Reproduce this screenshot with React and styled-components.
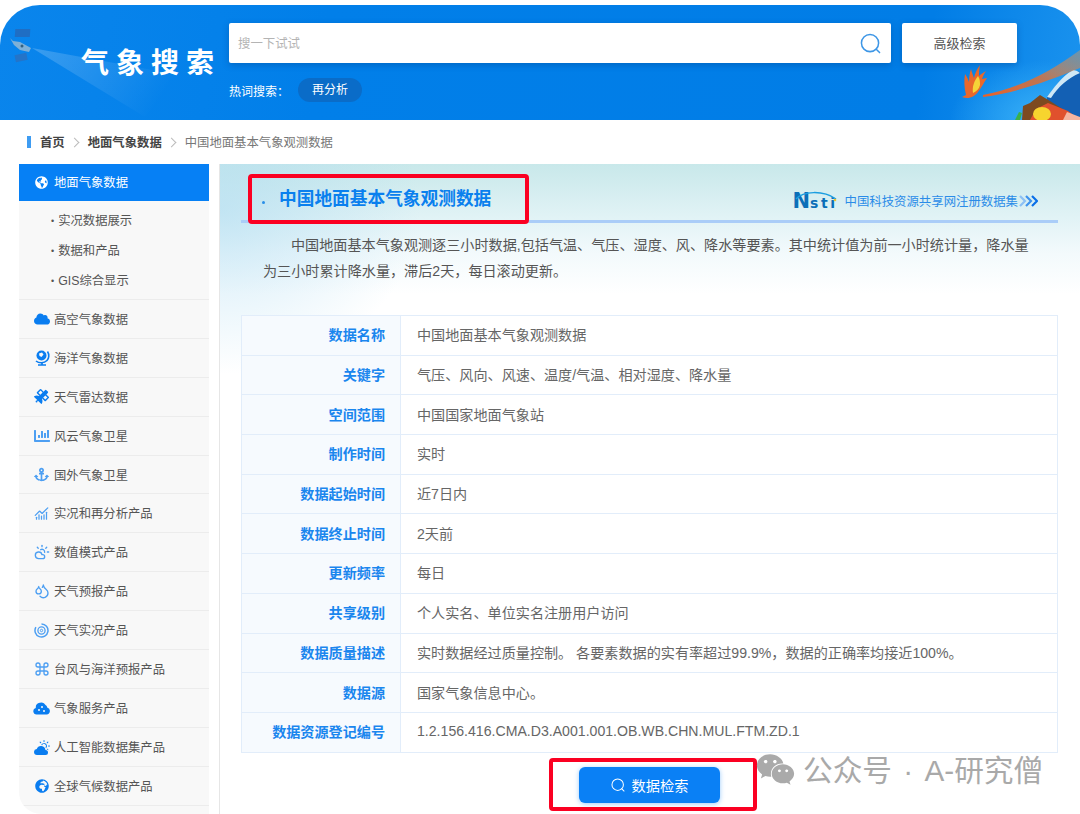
import React from "react";
import styled, { createGlobalStyle } from "styled-components";
import { FaGlobeAmericas, FaGlobeAfrica, FaCloud, FaSatellite, FaChartBar, FaAnchor, FaWeixin } from "react-icons/fa";
import { BsCloudSunFill } from "react-icons/bs";
import { ChartNoAxesCombined, CloudSun, Droplets, Command } from "lucide-react";

const FONT = `"Liberation Sans", "Noto Sans CJK SC", sans-serif`;

const GlobalStyle = createGlobalStyle`
  html, body {
    margin: 0;
    padding: 0;
    background: #ffffff;
    font-family: ${FONT};
  }
  * {
    box-sizing: border-box;
  }
`;

const Page = styled.div`
  position: relative;
  width: 1080px;
  height: 814px;
  padding-top: 5px;
  overflow: hidden;
  background: #ffffff;
`;

const Header = styled.header`
  position: relative;
  height: 115px;
  display: flex;
  border-radius: 40px 40px 0 0;
  background: linear-gradient(100deg, #0a85ec 0%, #017fe9 30%, #017de6 85%, #1b93ee 100%);
  overflow: hidden;
`;

const Beam = styled.svg`
  position: absolute;
  left: 0;
  top: 0;
`;

const Decor = styled.svg`
  position: absolute;
  right: 0;
  bottom: 0;
`;

const LogoBlock = styled.div`
  position: relative;
  width: 229px;
  padding: 40px 0 0 81px;
`;

const LogoText = styled.div`
  font-size: 28px;
  line-height: 37px;
  font-weight: 700;
  letter-spacing: 7px;
  white-space: nowrap;
  color: #ffffff;
`;

const SearchArea = styled.div`
  position: relative;
  width: 788px;
  padding-top: 18px;
`;

const SearchRow = styled.div`
  display: flex;
  gap: 11px;
  height: 40px;
`;

const SearchBox = styled.div`
  width: 662px;
  display: flex;
  align-items: center;
  justify-content: space-between;
  padding: 0 10px 0 9px;
  background: #ffffff;
  border-radius: 2px;
  box-shadow: 0 2px 6px rgba(0, 60, 130, 0.35);
`;

const Placeholder = styled.span`
  font-size: 12.4px;
  color: #b4b4b4;
`;

const AdvancedButton = styled.button`
  width: 115px;
  padding: 0 0 2px;
  border: 0;
  border-radius: 2px;
  background: #ffffff;
  font-family: ${FONT};
  font-size: 13px;
  color: #555555;
  box-shadow: 0 2px 6px rgba(0, 60, 130, 0.35);
`;

const HotRow = styled.div`
  display: flex;
  align-items: center;
  margin-top: 15px;
  font-size: 12px;
  color: #ffffff;
`;

const HotChip = styled.span`
  margin-left: 9px;
  width: 64px;
  height: 24px;
  line-height: 24px;
  text-align: center;
  border-radius: 12px;
  background: #0a6cc8;
`;

const Crumbs = styled.nav`
  height: 44px;
  display: flex;
  align-items: center;
  padding-left: 27px;
  font-size: 12.35px;
`;

const CrumbMark = styled.i`
  width: 4px;
  height: 12px;
  margin-right: 9px;
  background: #3e9cf2;
`;

const CrumbLink = styled.span`
  font-weight: 700;
  color: #444444;
`;

const CrumbCurrent = styled.span`
  color: #777777;
`;

const CrumbSep = styled.span`
  width: 7px;
  height: 7px;
  margin: 0 10px 0 6px;
  border-top: 1px solid #bbbbbb;
  border-right: 1px solid #bbbbbb;
  transform: rotate(45deg);
`;

const Body = styled.div`
  display: flex;
  padding-left: 19px;
`;

const Sidebar = styled.aside`
  width: 190px;
  height: 650px;
  flex: none;
  background: #f8f8f8;
  border-bottom-left-radius: 22px;
  overflow: hidden;
`;

const ActiveItem = styled.div`
  height: 37px;
  display: flex;
  align-items: center;
  gap: 4px;
  padding: 0 0 1px 14px;
  background: #0680f5;
  font-size: 12.33px;
  color: #ffffff;
`;

const SubList = styled.ul`
  list-style: none;
  margin: 0;
  padding: 5px 0 3px 32px;
  border-bottom: 1px solid #ececec;
`;

const SubItem = styled.li`
  height: 30px;
  line-height: 30px;
  font-size: 12.33px;
  color: #555555;
  &::before {
    content: "•";
    margin-right: 4px;
    font-size: 9px;
    vertical-align: 1px;
  }
`;

const NavItem = styled.div`
  height: 38.9px;
  display: flex;
  align-items: center;
  gap: 4px;
  padding-left: 14px;
  border-bottom: 1px solid #ececec;
  font-size: 12.33px;
  color: #555555;
`;

const IconSlot = styled.span`
  width: 17px;
  height: 17px;
  display: flex;
  align-items: center;
  justify-content: center;
  color: ${(p) => (p.$white ? "#ffffff" : p.$light ? "#4d9ff2" : "#0a7df0")};
`;

const Main = styled.main`
  position: relative;
  width: 861px;
  height: 650px;
  margin-left: 10px;
  padding: 0 22px 0 21px;
  border-left: 1px solid #e6e6e6;
  background:
    radial-gradient(ellipse 200px 165px at 0 45px, rgba(175, 220, 242, 0.6), rgba(200, 230, 245, 0) 100%),
    linear-gradient(to bottom, #c8e8ea 0, #e2f3f6 55px, #f3fafc 90px, #ffffff 130px);
`;

const TitleBar = styled.div`
  height: 59px;
  display: flex;
  align-items: center;
  justify-content: space-between;
  padding: 9px 20px 0 21px;
  border-bottom: 3px solid #aacdf8;
`;

const Title = styled.h1`
  margin: 0;
  font-size: 17.7px;
  font-weight: 700;
  color: #0a80ee;
  &::before {
    content: "";
    display: inline-block;
    width: 3px;
    height: 3px;
    margin-right: 14px;
    border-radius: 50%;
    background: #2a8fe8;
    vertical-align: 1px;
  }
`;

const Registered = styled.div`
  display: flex;
  align-items: center;
  margin-top: 8px;
  font-size: 12.4px;
  color: #2a8ce8;
`;

const LogoWord = styled.span`
  position: relative;
  width: 52px;
  height: 20px;
  display: flex;
  align-items: baseline;
  font-family: "DejaVu Sans", sans-serif;
  font-size: 14px;
  line-height: 20px;
  font-weight: 700;
  letter-spacing: 2.5px;
  color: #0b6fb8;
`;

const LogoInitial = styled.span`
  font-size: 21px;
  letter-spacing: 0;
`;

const LogoArc = styled.svg`
  position: absolute;
  left: 0;
  top: 0;
`;

const Chevrons = styled.svg`
  margin-left: 1px;
`;

const Desc = styled.p`
  margin: 10px 0 0;
  padding: 0 21px 0 22px;
  height: 82px;
  font-size: 14.12px;
  line-height: 25.5px;
  text-indent: 28px;
  color: #555555;
`;

const InfoTable = styled.div`
  border: 1px solid #e2edfa;
  border-bottom: 0;
`;

const InfoRow = styled.div`
  height: 39.7px;
  display: flex;
  align-items: center;
  border-bottom: 1px solid #e2edfa;
  font-size: 14.12px;
`;

const InfoLabel = styled.div`
  width: 159px;
  height: 100%;
  display: flex;
  align-items: center;
  justify-content: flex-end;
  padding: 0 15px 2px 0;
  border-right: 1px solid #e2edfa;
  background: #f6fafe;
  font-weight: 700;
  color: #1a86ee;
`;

const InfoValue = styled.div`
  padding: 0 0 2px 16px;
  color: #666666;
`;

const ButtonRow = styled.div`
  display: flex;
  justify-content: center;
  margin-top: 14px;
`;

const SearchButton = styled.button`
  width: 141px;
  height: 36px;
  display: flex;
  align-items: center;
  justify-content: center;
  gap: 7px;
  border: 0;
  border-radius: 6px;
  background: #0a80f5;
  font-family: ${FONT};
  font-size: 14.2px;
  color: #ffffff;
  box-shadow: 0 1px 5px rgba(10, 128, 245, 0.4);
`;

const RedBox = styled.div`
  position: absolute;
  left: ${(p) => p.$x}px;
  top: ${(p) => p.$y}px;
  width: ${(p) => p.$w}px;
  height: ${(p) => p.$h}px;
  border: 4px solid #fb0022;
  border-radius: 4px;
  pointer-events: none;
`;

const Watermark = styled.div`
  position: absolute;
  left: 756px;
  top: 749px;
  display: flex;
  align-items: center;
  gap: 8px;
  font-size: 29.7px;
  line-height: 44px;
  word-spacing: 3px;
  white-space: nowrap;
  color: #a9a9a9;
`;

const WechatIcon = styled(FaWeixin)`
  margin-bottom: 4px;
  color: #aaaaaa;
`;

// magnifier used in the search box and on the button
function Magnifier({ size, color, width }) {
  return (
    <svg width={size} height={size} viewBox="0 0 22 22" fill="none" stroke={color} strokeWidth={width}>
      <circle cx="10.5" cy="10.5" r="9" />
      <path d="M17 17l3.5 3.5" strokeLinecap="round" />
    </svg>
  );
}

function ServiceIcon() {
  return (
    <svg width="17" height="15" viewBox="0 0 17 15" fill="currentColor">
      <path d="M3.6 14.5A3.3 3.3 0 0 1 2.8 8a4.8 4.8 0 0 1 4-5.2A4.6 4.6 0 0 1 12.5 5a3.2 3.2 0 0 1 1.7 2.6 3.5 3.5 0 0 1-.6 6.9z" />
      <circle cx="6" cy="10" r="1" fill="#f8f8f8" />
      <circle cx="9" cy="7" r="1" fill="#f8f8f8" />
      <circle cx="11" cy="11" r="1" fill="#f8f8f8" />
    </svg>
  );
}

// globe on a curved stand
function StandGlobeIcon() {
  return (
    <svg width="16" height="17" viewBox="0 0 16 17" fill="none">
      <circle cx="7.5" cy="6.5" r="5" fill="currentColor" />
      <path d="M5 4.5l3-1 1.5 2-2 2.5-2-1z" fill="#f8f8f8" />
      <path d="M2 12c3 2.5 8 2.5 11-.5 2-2 2.5-6 .5-9" stroke="currentColor" strokeWidth="1.6" />
      <path d="M4 16h8M8 14v2" stroke="currentColor" strokeWidth="1.6" />
    </svg>
  );
}

function SwirlIcon() {
  return (
    <svg width="15" height="15" viewBox="0 0 15 15" fill="none" stroke="currentColor">
      <path d="M7.5 1a6.5 6.5 0 1 1-5.6 3.2" strokeWidth="1.5" />
      <circle cx="7.5" cy="7.5" r="3.6" strokeWidth="1.3" />
      <circle cx="7.5" cy="7.5" r="1.2" strokeWidth="1" />
    </svg>
  );
}

const navItems = [
  { text: "高空气象数据", icon: <FaCloud size={16} /> },
  { text: "海洋气象数据", icon: <StandGlobeIcon /> },
  { text: "天气雷达数据", icon: <FaSatellite size={15} /> },
  { text: "风云气象卫星", icon: <FaChartBar size={16} />, light: true },
  { text: "国外气象卫星", icon: <FaAnchor size={15} />, light: true },
  { text: "实况和再分析产品", icon: <ChartNoAxesCombined size={15} />, light: true },
  { text: "数值模式产品", icon: <CloudSun size={16} />, light: true },
  { text: "天气预报产品", icon: <Droplets size={16} />, light: true },
  { text: "天气实况产品", icon: <SwirlIcon />, light: true },
  { text: "台风与海洋预报产品", icon: <Command size={16} />, light: true },
  { text: "气象服务产品", icon: <ServiceIcon /> },
  { text: "人工智能数据集产品", icon: <BsCloudSunFill size={16} /> },
  { text: "全球气候数据产品", icon: <FaGlobeAfrica size={14} /> },
];

const rows = [
  ["数据名称", "中国地面基本气象观测数据"],
  ["关键字", "气压、风向、风速、温度/气温、相对湿度、降水量"],
  ["空间范围", "中国国家地面气象站"],
  ["制作时间", "实时"],
  ["数据起始时间", "近7日内"],
  ["数据终止时间", "2天前"],
  ["更新频率", "每日"],
  ["共享级别", "个人实名、单位实名注册用户访问"],
  ["数据质量描述", "实时数据经过质量控制。 各要素数据的实有率超过99.9%，数据的正确率均接近100%。"],
  ["数据源", "国家气象信息中心。"],
  ["数据资源登记编号", "1.2.156.416.CMA.D3.A001.001.OB.WB.CHN.MUL.FTM.ZD.1"],
];

export default function App() {
  return (
    <>
      <GlobalStyle />
      <Page>
        <Header>
          <Beam width="240" height="115" viewBox="0 0 240 115">
            <defs>
              <linearGradient id="beam" x1="0" y1="0" x2="1" y2="0.3">
                <stop offset="0" stopColor="#ffffff" stopOpacity="0.2" />
                <stop offset="1" stopColor="#ffffff" stopOpacity="0" />
              </linearGradient>
            </defs>
            <polygon points="32,43 180,70 145,112" fill="url(#beam)" />
            <rect x="17" y="24" width="15" height="8" fill="#1f6ec4" transform="skewX(-4)" />
            <rect x="15" y="49" width="12" height="7" fill="#2474c8" transform="rotate(-12 21 52)" />
            <path d="M10 33l3 3 7 1 11 6-2 4-9-2-6-5z" fill="#7fb0d6" />
            <circle cx="22" cy="41" r="1.5" fill="#34617f" />
          </Beam>
          <Decor width="130" height="80" viewBox="950 40 130 80">
            <defs>
              <linearGradient id="trail" x1="0" y1="1" x2="1" y2="0">
                <stop offset="0" stopColor="#ea6128" />
                <stop offset="0.5" stopColor="#d8703a" stopOpacity="0.85" />
                <stop offset="1" stopColor="#c99a68" stopOpacity="0.45" />
              </linearGradient>
              <radialGradient id="glow" cx="0.75" cy="1" r="0.75">
                <stop offset="0" stopColor="#3ab2f8" />
                <stop offset="1" stopColor="#3ab2f8" stopOpacity="0" />
              </radialGradient>
            </defs>
            <rect x="950" y="40" width="130" height="80" fill="url(#glow)" />
            <path d="M1047 97c6-8 14-18 26-27l7 2v48h-33z" fill="#1360b4" />
            <path d="M1047 97c6-8 14-20 26-27 2 0 5 1 7 3-12 5-22 14-29 25z" fill="#cfe8f6" />
            <path d="M983 95C1020 88 1050 72 1080 50L1080 68C1050 80 1020 92 983 97z" fill="url(#trail)" />
            <path d="M962 97l4-2c-2-8-2-15-1-21 2 3 3 5 4 8 0-5 1-10 2-13 1 4 2 6 3 9 1-5 3-9 6-13-1 5-1 8-1 11 2-2 5-4 7-5-2 3-3 5-4 8 2 0 3-1 5-1-3 4-5 9-9 14-3 4-9 8-16 5z" fill="#e8682c" />
            <path d="M973 93c-1-6 1-12 5-17 2 3 2 6 2 9-1 4-3 6-7 8z" fill="#f5d438" />
            <path d="M1022 120l1-14 7-3 10-8 10 6 14 9 10 10z" fill="#7d4a20" />
            <path d="M1030 120l6-11 12-6 20 8 12 9z" fill="#e0512d" />
            <ellipse cx="1042" cy="114" rx="9" ry="7" fill="#f7d42e" />
            <path d="M1063 120l4-8 13 5v3z" fill="#f5b5a0" />
            <path d="M1015 120l4-8 3 1-2 7z" fill="#3bb04a" />
          </Decor>
          <LogoBlock>
            <LogoText>气象搜索</LogoText>
          </LogoBlock>
          <SearchArea>
            <SearchRow>
              <SearchBox>
                <Placeholder>搜一下试试</Placeholder>
                <Magnifier size={21} color="#3d96e6" width={1.6} />
              </SearchBox>
              <AdvancedButton>高级检索</AdvancedButton>
            </SearchRow>
            <HotRow>
              <span>热词搜索：</span>
              <HotChip>再分析</HotChip>
            </HotRow>
          </SearchArea>
        </Header>

        <Crumbs>
          <CrumbMark />
          <CrumbLink>首页</CrumbLink>
          <CrumbSep />
          <CrumbLink>地面气象数据</CrumbLink>
          <CrumbSep />
          <CrumbCurrent>中国地面基本气象观测数据</CrumbCurrent>
        </Crumbs>

        <Body>
          <Sidebar>
            <ActiveItem>
              <IconSlot $white>
                <FaGlobeAmericas size={13} />
              </IconSlot>
              地面气象数据
            </ActiveItem>
            <SubList>
              <SubItem>实况数据展示</SubItem>
              <SubItem>数据和产品</SubItem>
              <SubItem>GIS综合显示</SubItem>
            </SubList>
            {navItems.map((item) => (
              <NavItem key={item.text}>
                <IconSlot $light={item.light}>{item.icon}</IconSlot>
                {item.text}
              </NavItem>
            ))}
          </Sidebar>

          <Main>
            <TitleBar>
              <Title>中国地面基本气象观测数据</Title>
              <Registered>
                <LogoWord>
                  <LogoArc width="52" height="20" viewBox="0 0 52 20" fill="none">
                    <path d="M3 8C10 0 30-1 43 8" stroke="#1c9ee0" strokeWidth="1.5" />
                    <circle cx="42" cy="9" r="1.3" fill="#f0c030" />
                  </LogoArc>
                  <LogoInitial>N</LogoInitial>sti
                </LogoWord>
                中国科技资源共享网注册数据集
                <Chevrons width="19" height="12" viewBox="0 0 19 12" fill="none" strokeWidth="2.2">
                  <path d="M1 1l5 5-5 5" stroke="#8cc0f5" />
                  <path d="M7 1l5 5-5 5" stroke="#3d92ee" />
                  <path d="M13 1l5 5-5 5" stroke="#0a6fe8" />
                </Chevrons>
              </Registered>
            </TitleBar>
            <Desc>
              中国地面基本气象观测逐三小时数据,包括气温、气压、湿度、风、降水等要素。其中统计值为前一小时统计量，降水量为三小时累计降水量，滞后2天，每日滚动更新。
            </Desc>
            <InfoTable>
              {rows.map(([label, value]) => (
                <InfoRow key={label}>
                  <InfoLabel>{label}</InfoLabel>
                  <InfoValue>{value}</InfoValue>
                </InfoRow>
              ))}
            </InfoTable>
            <ButtonRow>
              <SearchButton>
                <Magnifier size={14} color="#ffffff" width={1.6} />
                数据检索
              </SearchButton>
            </ButtonRow>
          </Main>
        </Body>

        <RedBox $x={248} $y={174} $w={281} $h={50} />
        <RedBox $x={549} $y={758} $w={208} $h={53} />
        <Watermark>
          <WechatIcon size={39} />
          公众号 · A-研究僧
        </Watermark>
      </Page>
    </>
  );
}
